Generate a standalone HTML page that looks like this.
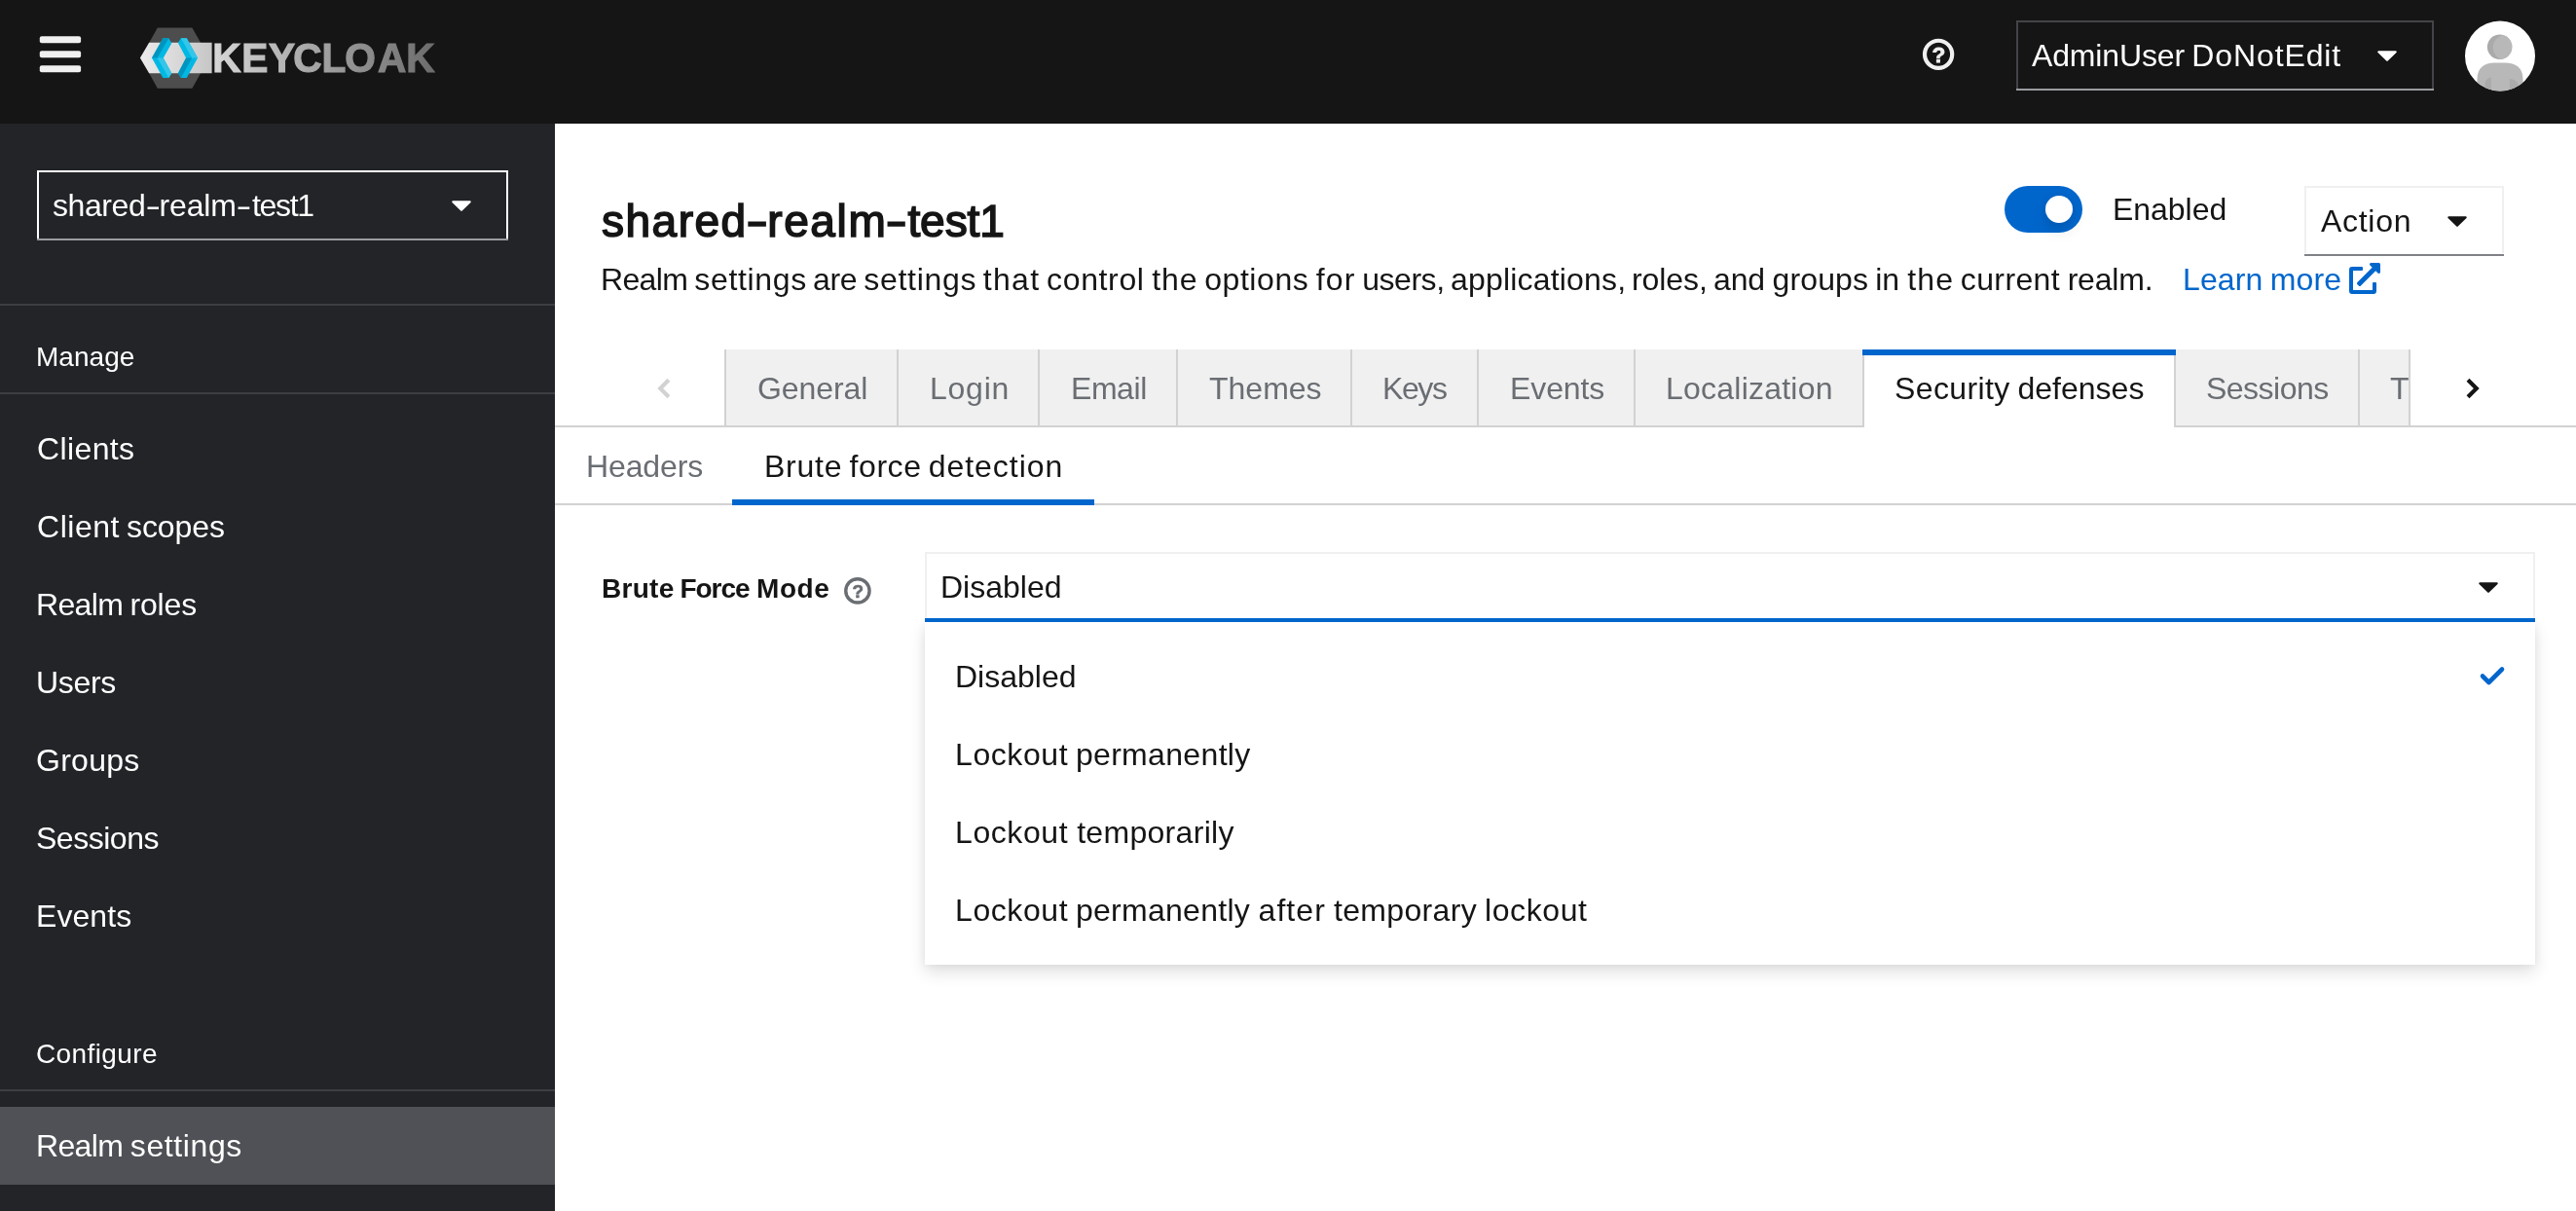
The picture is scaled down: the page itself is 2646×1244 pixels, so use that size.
<!DOCTYPE html>
<html lang="en">
<head>
<meta charset="utf-8">
<title>Keycloak Administration Console</title>
<style>
*{box-sizing:border-box;margin:0;padding:0}
html,body{width:2646px;height:1244px;overflow:hidden;background:#fff}
body{position:relative;font-family:"Liberation Sans",sans-serif;color:#151515}
.a{position:absolute}
svg{will-change:transform}
.t{position:absolute;white-space:pre;display:block;will-change:transform;font-kerning:none}
#hdr{left:0;top:0;width:2646px;height:127px;background:#151515}
#side{left:0;top:127px;width:570px;height:1117px;background:#232428}
.bar{left:41px;width:42px;height:7px;border-radius:2px;background:#f0f0f0}
.div{left:0;width:570px;height:2px;background:#3d3e42}
#cur{left:0;top:1137px;width:570px;height:80px;background:#505156}
.tab{top:359px;height:78px;background:#f0f0f0;border-left:2px solid #d2d2d2}
.line{background:#d2d2d2}
</style>
</head>
<body>
<div id="hdr" class="a"></div>
<div id="side" class="a"></div>

<!-- hamburger -->
<svg class="a" style="left:36px;top:32px" width="52" height="48" viewBox="36 32 52 48">
  <rect x="40.8" y="37.2" width="42.3" height="7.1" rx="2" fill="#f0f0f0"/>
  <rect x="40.8" y="52.2" width="42.3" height="7.1" rx="2" fill="#f0f0f0"/>
  <rect x="40.8" y="67.2" width="42.3" height="7.1" rx="2" fill="#f0f0f0"/>
</svg>

<!-- logo -->
<svg class="a" style="left:130px;top:20px" width="340" height="84" viewBox="130 20 340 84">
  <defs>
    <linearGradient id="band" gradientUnits="userSpaceOnUse" x1="144" y1="0" x2="218" y2="0">
      <stop offset="0" stop-color="#ececec"/><stop offset="1" stop-color="#c6c6c6"/>
    </linearGradient>
    <linearGradient id="word" gradientUnits="userSpaceOnUse" x1="234" y1="0" x2="475" y2="0">
      <stop offset="0" stop-color="#d6d6d6"/><stop offset="0.5" stop-color="#a0a0a0"/><stop offset="1" stop-color="#6c6c6c"/>
    </linearGradient>
  </defs>
  <polygon points="161.8,28.6 197.4,28.6 215,59.6 197.4,90.7 161.8,90.7 144.5,59.6" fill="#4d4d4d"/>
  <polygon points="143.9,59.6 153.2,43.8 217.6,43.8 217.6,75.2 153.2,75.2" fill="url(#band)"/>
  <!-- left chevron -->
  <polygon points="156,59.6 167.4,39.2 173.3,39.2 176.3,44.4 167.8,59.6 176.3,75.2 173.3,80.1 167.4,80.1" fill="#00b8e3"/>
  <polygon points="156,59.6 167.4,39.2 173.3,39.2 161.6,59.6" fill="#0095bf"/>
  <polygon points="161.6,59.6 167.8,59.6 176.3,75.2 173.3,80.1" fill="#33c6e9"/>
  <!-- right chevron -->
  <polygon points="203,59.6 191.8,39.2 185.9,39.2 182.9,44.1 191.1,59.6 182.9,75.2 185.9,80.1 191.8,80.1" fill="#00b8e3"/>
  <polygon points="185.9,39.2 191.8,39.2 203,59.6 197.2,59.6" fill="#33c6e9"/>
  <polygon points="191.1,59.6 197.2,59.6 185.9,80.1 182.9,75.2" fill="#0095bf"/>
  <text y="74.3" transform="scale(0.94,1)" font-family="Liberation Sans, sans-serif" font-weight="700" font-size="43.2" fill="url(#word)" stroke="url(#word)" stroke-width="1.2" x="232.1 264.1 293.7 320.5 351.6 376.9 412.8 444.0">KEYCLOAK</text>
</svg>

<!-- help icon -->
<svg class="a" style="left:1970px;top:35px" width="42" height="42" viewBox="0 0 42 42">
  <circle cx="21.1" cy="20.85" r="14.1" fill="none" stroke="#f0f0f0" stroke-width="4.2"/>
  <text x="14.43" y="29" font-family="Liberation Sans, sans-serif" font-weight="700" font-size="22.6" fill="#f0f0f0" stroke="#f0f0f0" stroke-width="0.8">?</text>
</svg>

<!-- user dropdown -->
<div class="a" style="left:2071px;top:21px;width:429px;height:72px;border:2px solid #434448;border-bottom:0"></div>
<div class="a" style="left:2071px;top:91px;width:429px;height:2px;background:#9b9ca0"></div>
<svg class="a" style="left:2442px;top:52px" width="20" height="11" viewBox="0 0 20 11"><path d="M1.2,0.3 H18.8 a1,1 0 0 1 .7,1.7 L10.7,10.6 a1,1 0 0 1 -1.4,0 L.5,2 A1,1 0 0 1 1.2,.3z" fill="#fff"/></svg>

<!-- avatar -->
<svg class="a" style="left:2532px;top:21px" width="73" height="73" viewBox="0 -0.5 73 73">
  <defs><clipPath id="av"><circle cx="36" cy="36" r="36"/></clipPath><clipPath id="hd"><circle cx="35.6" cy="26.8" r="12.7"/></clipPath></defs>
  <circle cx="36" cy="36" r="36" fill="#fff"/>
  <g clip-path="url(#av)">
    <circle cx="35.6" cy="26.8" r="12.7" fill="#aaaaaa"/>
    <circle cx="41.6" cy="27.3" r="12.9" fill="#b8b8b8" clip-path="url(#hd)"/>
    <path d="M12.5,80 V60 C12.5,48 20,43 30,43 H41 C52,43 59.5,48 59.5,60 V80 Z" fill="#b8b8b8"/>
    <path d="M20.5,80 V66 C20.5,61 23,58.5 26.8,58 V80 Z" fill="#aaaaaa"/>
    <path d="M45.8,80 V59.5 C51,60 55.3,63 55.3,68 V80 Z" fill="#aaaaaa"/>
  </g>
</svg>

<!-- realm selector -->
<div class="a" style="left:38px;top:175px;width:484px;height:72px;border:2px solid #fff;border-bottom:0"></div>
<div class="a" style="left:38px;top:245px;width:484px;height:2px;background:#9b9ca0"></div>
<svg class="a" style="left:464px;top:206px" width="20" height="11" viewBox="0 0 20 11"><path d="M1.2,0.3 H18.8 a1,1 0 0 1 .7,1.7 L10.7,10.6 a1,1 0 0 1 -1.4,0 L.5,2 A1,1 0 0 1 1.2,.3z" fill="#fff"/></svg>

<div class="a div" style="top:312px"></div>
<div class="a div" style="top:403px"></div>
<div class="a div" style="top:1119px"></div>
<div id="cur" class="a"></div>

<!-- toggle -->
<div class="a" style="left:2059px;top:191px;width:80px;height:48px;border-radius:24px;background:#0066cc"></div>
<div class="a" style="left:2101px;top:201px;width:28px;height:28px;border-radius:14px;background:#fff;box-shadow:0 8px 16px 0 rgba(3,3,3,.12),0 0 8px 0 rgba(3,3,3,.06)"></div>

<!-- action -->
<div class="a" style="left:2367px;top:191px;width:205px;height:69px;border:2px solid #f0f0f0;border-bottom:0"></div>
<div class="a" style="left:2367px;top:261px;width:205px;height:2px;background:#808186"></div>
<svg class="a" style="left:2514px;top:222px" width="20" height="11" viewBox="0 0 20 11"><path d="M1.2,0.3 H18.8 a1,1 0 0 1 .7,1.7 L10.7,10.6 a1,1 0 0 1 -1.4,0 L.5,2 A1,1 0 0 1 1.2,.3z" fill="#151515"/></svg>

<!-- external link icon -->
<svg class="a" style="left:2413px;top:270px" width="32" height="32" viewBox="0 0 512 512"><path fill="#0066cc" d="M432,320H400a16,16,0,0,0-16,16V448H64V128H208a16,16,0,0,0,16-16V80a16,16,0,0,0-16-16H48A48,48,0,0,0,0,112V464a48,48,0,0,0,48,48H400a48,48,0,0,0,48-48V336A16,16,0,0,0,432,320ZM488,0h-128c-21.37,0-32.05,25.91-17,41l35.73,35.73L135,320.37a24,24,0,0,0,0,34L157.67,377a24,24,0,0,0,34,0L435.28,133.32,471,169c15,15,41,4.5,41-17V24A24,24,0,0,0,488,0Z"/></svg>

<!-- tabs -->
<div class="a tab" style="left:744px;width:177px"></div>
<div class="a tab" style="left:921px;width:146px"></div>
<div class="a tab" style="left:1066px;width:143px"></div>
<div class="a tab" style="left:1208px;width:180px"></div>
<div class="a tab" style="left:1387px;width:131px"></div>
<div class="a tab" style="left:1517px;width:161px"></div>
<div class="a tab" style="left:1678px;width:236px"></div>
<div class="a tab" style="left:2233px;width:190px"></div>
<div class="a tab" style="left:2422px;width:54px;border-right:2px solid #d2d2d2;overflow:hidden"><span class="t" style="left:31.18px;top:15.9px;font-size:32px;line-height:48px;color:#6a6e73">Tokens</span></div>
<div class="a line" style="left:570px;top:437px;width:1345px;height:2px"></div>
<div class="a line" style="left:2233px;top:437px;width:413px;height:2px"></div>
<!-- active tab -->
<div class="a" style="left:1913px;top:365px;width:322px;height:74px;border-left:2px solid #d2d2d2;border-right:2px solid #d2d2d2"></div>
<div class="a" style="left:1913px;top:359px;width:322px;height:6px;background:#0066cc"></div>
<!-- scroll arrows -->
<svg class="a" style="left:672px;top:388px" width="20" height="22" viewBox="0 0 20 22"><path d="M14.9,2.2 L6.2,10.95 L14.9,19.7" fill="none" stroke="#d2d2d2" stroke-width="4.1" stroke-linejoin="miter" stroke-linecap="butt"/></svg>
<svg class="a" style="left:2531px;top:388px" width="20" height="22" viewBox="0 0 20 22"><path d="M4,2.2 L12.8,10.95 L4,19.7" fill="none" stroke="#151515" stroke-width="4.1" stroke-linejoin="miter" stroke-linecap="butt"/></svg>

<!-- subtabs -->
<div class="a line" style="left:570px;top:517px;width:2076px;height:2px"></div>
<div class="a" style="left:752px;top:513px;width:372px;height:6px;background:#0066cc"></div>

<!-- field help icon -->
<svg class="a" style="left:866px;top:592px" width="30" height="30" viewBox="0 0 30 30">
  <circle cx="14.9" cy="14.9" r="12.15" fill="none" stroke="#6a6e73" stroke-width="3.4"/>
  <text x="9.54" y="21.7" font-family="Liberation Sans, sans-serif" font-weight="700" font-size="18.9" fill="#6a6e73" stroke="#6a6e73" stroke-width="0.6">?</text>
</svg>

<!-- select -->
<div class="a" style="left:950px;top:639px;width:1654px;height:352px;background:#fff;box-shadow:0 8px 16px 0 rgba(3,3,3,.12),0 0 8px 0 rgba(3,3,3,.06)"></div>
<div class="a" style="left:950px;top:567px;width:1654px;height:70px;background:#fff;border:2px solid #f0f0f0;border-bottom:0"></div>
<div class="a" style="left:950px;top:635px;width:1654px;height:4px;background:#0066cc"></div>
<svg class="a" style="left:2546px;top:598px" width="20" height="11" viewBox="0 0 20 11"><path d="M1.2,0.3 H18.8 a1,1 0 0 1 .7,1.7 L10.7,10.6 a1,1 0 0 1 -1.4,0 L.5,2 A1,1 0 0 1 1.2,.3z" fill="#151515"/></svg>
<svg class="a" style="left:2546px;top:683px" width="28" height="22" viewBox="0 0 28 22"><path d="M4,11.5 L10.5,18 L24,4.5" fill="none" stroke="#0066cc" stroke-width="4.6" stroke-linejoin="round" stroke-linecap="round"/></svg>

<span class="t" style="left:2086.94px;top:32.90px;font-size:32px;line-height:48px;font-weight:400;color:#ffffff;"><span style="letter-spacing:-0.146px;">AdminUser </span><span style="letter-spacing:0.877px;margin-left:-1.354px;">DoNotEdit</span></span>
<span class="t" style="left:53.81px;top:187.00px;font-size:32px;line-height:48px;font-weight:400;color:#ffffff;"><span style="letter-spacing:-0.418px;">shared</span><span style="letter-spacing:0.000px;margin-left:2.828px;display:inline-block;transform-origin:5.33px 50%;transform:scaleX(1.459);">-</span><span style="letter-spacing:-0.170px;margin-left:0.747px;">realm</span><span style="letter-spacing:0.000px;margin-left:2.233px;display:inline-block;transform-origin:5.33px 50%;transform:scaleX(1.485);">-</span><span style="letter-spacing:-1.307px;margin-left:3.387px;">test1</span></span>
<span class="t" style="left:37.40px;top:346.00px;font-size:28px;line-height:42px;font-weight:400;color:#ffffff;letter-spacing:0.031px;">Manage</span>
<span class="t" style="left:37.67px;top:437.00px;font-size:32px;line-height:48px;font-weight:400;color:#ffffff;letter-spacing:0.378px;">Clients</span>
<span class="t" style="left:37.67px;top:517.00px;font-size:32px;line-height:48px;font-weight:400;color:#ffffff;"><span style="letter-spacing:0.529px;">Client </span><span style="letter-spacing:-0.109px;margin-left:-2.374px;">scopes</span></span>
<span class="t" style="left:37.27px;top:597.10px;font-size:32px;line-height:48px;font-weight:400;color:#ffffff;"><span style="letter-spacing:-0.659px;">Realm </span><span style="letter-spacing:-0.120px;margin-left:-1.008px;">roles</span></span>
<span class="t" style="left:37.23px;top:677.10px;font-size:32px;line-height:48px;font-weight:400;color:#ffffff;letter-spacing:-0.309px;">Users</span>
<span class="t" style="left:37.29px;top:757.10px;font-size:32px;line-height:48px;font-weight:400;color:#ffffff;letter-spacing:0.266px;">Groups</span>
<span class="t" style="left:36.95px;top:837.10px;font-size:32px;line-height:48px;font-weight:400;color:#ffffff;letter-spacing:-0.476px;">Sessions</span>
<span class="t" style="left:37.27px;top:917.10px;font-size:32px;line-height:48px;font-weight:400;color:#ffffff;letter-spacing:0.071px;">Events</span>
<span class="t" style="left:37.48px;top:1062.00px;font-size:28px;line-height:42px;font-weight:400;color:#ffffff;letter-spacing:0.382px;">Configure</span>
<span class="t" style="left:37.27px;top:1153.00px;font-size:32px;line-height:48px;font-weight:400;color:#ffffff;"><span style="letter-spacing:-0.659px;">Realm </span><span style="letter-spacing:0.595px;margin-left:-0.573px;">settings</span></span>
<span class="t" style="left:617.82px;top:192.90px;font-size:46px;line-height:69px;font-weight:400;color:#151515;-webkit-text-stroke:1.6px #151515;"><span style="letter-spacing:1.499px;">shared</span><span style="letter-spacing:0.000px;margin-left:1.927px;display:inline-block;transform-origin:7.66px 50%;transform:scaleX(1.451);">-</span><span style="letter-spacing:1.616px;margin-left:3.336px;">realm</span><span style="letter-spacing:0.000px;margin-left:1.592px;display:inline-block;transform-origin:7.66px 50%;transform:scaleX(1.425);">-</span><span style="letter-spacing:-0.046px;margin-left:4.145px;">test1</span></span>
<span class="t" style="left:617.27px;top:263.00px;font-size:32px;line-height:48px;font-weight:400;color:#151515;"><span style="letter-spacing:-0.659px;">Realm </span><span style="letter-spacing:0.652px;margin-left:-1.073px;">settings </span><span style="letter-spacing:-0.284px;margin-left:-3.411px;">are </span><span style="letter-spacing:0.695px;margin-left:-1.734px;">settings </span><span style="letter-spacing:1.315px;margin-left:-3.021px;">that </span><span style="letter-spacing:0.642px;margin-left:-3.514px;">control </span><span style="letter-spacing:1.011px;margin-left:-2.000px;">the </span><span style="letter-spacing:0.569px;margin-left:-3.378px;">options </span><span style="letter-spacing:1.170px;margin-left:-2.037px;">for </span><span style="letter-spacing:-0.478px;margin-left:-3.441px;">users, </span><span style="letter-spacing:0.179px;margin-left:-1.970px;">applications, </span><span style="letter-spacing:-0.050px;margin-left:-3.348px;">roles, </span><span style="letter-spacing:-0.134px;margin-left:-2.725px;">and </span><span style="letter-spacing:0.131px;margin-left:-1.228px;">groups </span><span style="letter-spacing:-0.088px;margin-left:-1.950px;">in </span><span style="letter-spacing:1.111px;margin-left:-0.478px;">the </span><span style="letter-spacing:0.383px;margin-left:-3.394px;">current </span><span style="letter-spacing:-0.192px;margin-left:-1.717px;">realm.</span></span>
<span class="t" style="left:2242.28px;top:263.00px;font-size:32px;line-height:48px;font-weight:400;color:#0066cc;"><span style="letter-spacing:0.115px;">Learn </span><span style="letter-spacing:0.147px;margin-left:-1.723px;">more</span></span>
<span class="t" style="left:2170.38px;top:190.60px;font-size:32px;line-height:48px;font-weight:400;color:#151515;letter-spacing:-0.042px;">Enabled</span>
<span class="t" style="left:2383.94px;top:203.00px;font-size:32px;line-height:48px;font-weight:400;color:#151515;letter-spacing:0.701px;">Action</span>
<span class="t" style="left:777.89px;top:374.90px;font-size:32px;line-height:48px;font-weight:400;color:#6a6e73;letter-spacing:-0.082px;">General</span>
<span class="t" style="left:954.98px;top:374.90px;font-size:32px;line-height:48px;font-weight:400;color:#6a6e73;letter-spacing:0.752px;">Login</span>
<span class="t" style="left:1099.97px;top:374.90px;font-size:32px;line-height:48px;font-weight:400;color:#6a6e73;letter-spacing:-0.438px;">Email</span>
<span class="t" style="left:1241.88px;top:374.90px;font-size:32px;line-height:48px;font-weight:400;color:#6a6e73;letter-spacing:-0.004px;">Themes</span>
<span class="t" style="left:1420.28px;top:374.90px;font-size:32px;line-height:48px;font-weight:400;color:#6a6e73;letter-spacing:-1.420px;">Keys</span>
<span class="t" style="left:1550.67px;top:374.90px;font-size:32px;line-height:48px;font-weight:400;color:#6a6e73;letter-spacing:-0.109px;">Events</span>
<span class="t" style="left:1711.28px;top:374.90px;font-size:32px;line-height:48px;font-weight:400;color:#6a6e73;letter-spacing:0.228px;">Localization</span>
<span class="t" style="left:1946.15px;top:374.90px;font-size:32px;line-height:48px;font-weight:400;color:#151515;"><span style="letter-spacing:0.389px;">Security </span><span style="letter-spacing:0.018px;margin-left:-1.575px;">defenses</span></span>
<span class="t" style="left:2265.55px;top:374.90px;font-size:32px;line-height:48px;font-weight:400;color:#6a6e73;letter-spacing:-0.519px;">Sessions</span>
<span class="t" style="left:601.67px;top:455.20px;font-size:32px;line-height:48px;font-weight:400;color:#6a6e73;letter-spacing:-0.129px;">Headers</span>
<span class="t" style="left:785.48px;top:455.20px;font-size:32px;line-height:48px;font-weight:400;color:#151515;"><span style="letter-spacing:0.766px;">Brute </span><span style="letter-spacing:0.559px;margin-left:-2.397px;">force </span><span style="letter-spacing:0.968px;margin-left:-2.273px;">detection</span></span>
<span class="t" style="left:618.03px;top:583.80px;font-size:28px;line-height:42px;font-weight:700;color:#151515;"><span style="letter-spacing:0.278px;">Brute </span><span style="letter-spacing:-1.054px;margin-left:-2.066px;">Force </span><span style="letter-spacing:0.576px;margin-left:0.800px;">Mode</span></span>
<span class="t" style="left:965.67px;top:578.90px;font-size:32px;line-height:48px;font-weight:400;color:#151515;letter-spacing:-0.004px;">Disabled</span>
<span class="t" style="left:981.48px;top:670.80px;font-size:32px;line-height:48px;font-weight:400;color:#151515;letter-spacing:0.010px;">Disabled</span>
<span class="t" style="left:981.38px;top:750.90px;font-size:32px;line-height:48px;font-weight:400;color:#151515;"><span style="letter-spacing:0.580px;">Lockout </span><span style="letter-spacing:0.333px;margin-left:-1.748px;">permanently</span></span>
<span class="t" style="left:981.38px;top:830.80px;font-size:32px;line-height:48px;font-weight:400;color:#151515;"><span style="letter-spacing:0.580px;">Lockout </span><span style="letter-spacing:0.308px;margin-left:-0.470px;">temporarily</span></span>
<span class="t" style="left:981.38px;top:910.80px;font-size:32px;line-height:48px;font-weight:400;color:#151515;"><span style="letter-spacing:0.580px;">Lockout </span><span style="letter-spacing:0.283px;margin-left:-1.748px;">permanently </span><span style="letter-spacing:1.090px;margin-left:-0.779px;">after </span><span style="letter-spacing:0.350px;margin-left:-2.086px;">temporary </span><span style="letter-spacing:0.583px;margin-left:-1.309px;">lockout</span></span>
</body>
</html>
